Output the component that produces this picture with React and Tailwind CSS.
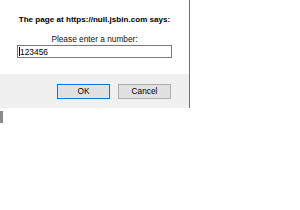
import React from 'react'

export default function App() {
  return (
    <div className="w-[300px] h-[210px] bg-white font-['Liberation_Sans',Arial,sans-serif] text-black">
      {/* prompt dialog */}
      <div className="w-[190px] border-r border-[#707070]">
        <div className="h-[74px] bg-white px-[17px] pt-[15px]">
          <div className="text-[8.1px] leading-[10px] font-bold text-center">
            The page at https://null.jsbin.com says:
          </div>
          <div className="mt-[9px] text-[8.3px] leading-[10px] text-center text-[#111]">
            Please enter a number:
          </div>
          <div className="mt-[1px] h-[13px] w-[155px] border border-[#7a7a7a] bg-white flex items-center pl-[1px]">
            <span className="w-px h-[9px] bg-black"></span>
            <span className="text-[8.4px] leading-[10px]">123456</span>
          </div>
        </div>
        <div className="h-[34px] bg-[#f0f0f0] flex justify-end items-start pt-[10px] pr-[18px] gap-[8px]">
          <button className="w-[53px] h-[15px] border border-[#0078d7] bg-[#e1e1e1] text-[8.3px] leading-none flex items-center justify-center shadow-[inset_0_0_0_1px_#d6e8f7]">
            OK
          </button>
          <button className="w-[53px] h-[15px] border border-[#adadad] bg-[#e1e1e1] text-[8.3px] leading-none flex items-center justify-center">
            Cancel
          </button>
        </div>
      </div>
      <div className="mt-[3px] w-[3px] h-[12px] bg-[#8a8a8a]"></div>
    </div>
  )
}
